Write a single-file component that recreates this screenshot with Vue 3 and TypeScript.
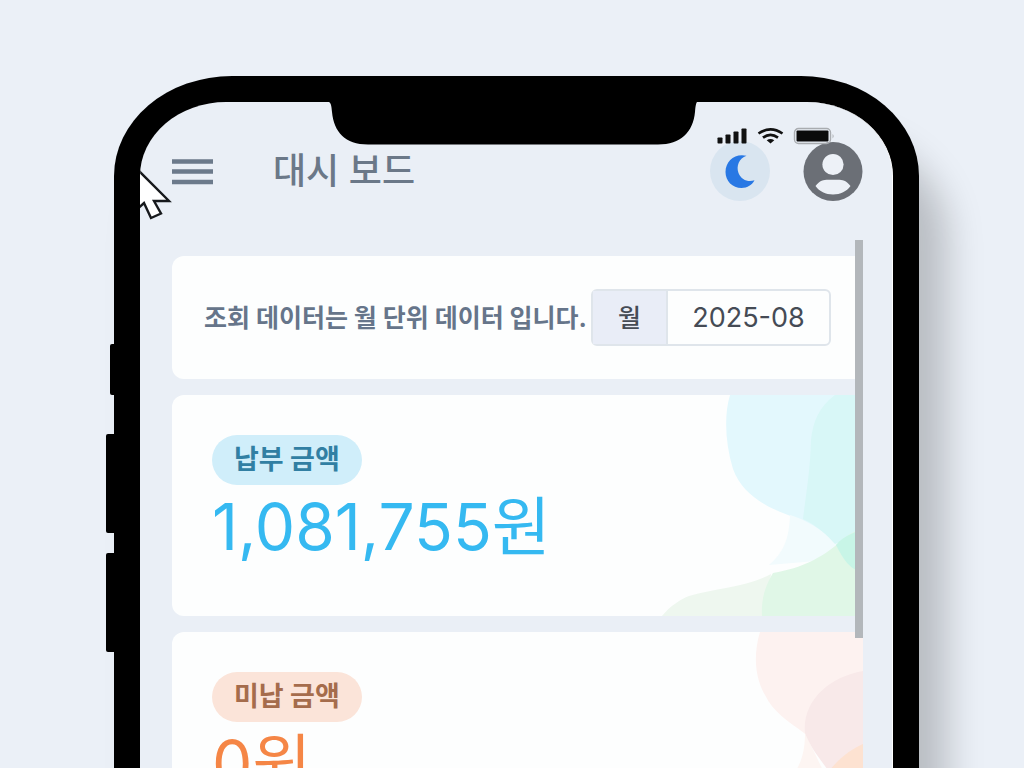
<script setup lang="ts">
import { ref } from 'vue'

interface Amount {
  id: string
  label: string
  value: string
}

const month = ref('2025-08')
const amounts: Amount[] = [
  { id: 'paid', label: '납부 금액', value: '1,081,755원' },
  { id: 'unpaid', label: '미납 금액', value: '0원' },
]
</script>

<template>
  <div class="stage">
    <div class="phone">
      <span class="side side-mute"></span>
      <span class="side side-up"></span>
      <span class="side side-down"></span>
      <div class="screen">
        <svg class="notch" width="368" height="43" viewBox="0 0 368 43" aria-hidden="true">
          <path d="M0 0C2 1 2.500 4 3 10C5 30 16 42.500 39 42.500H329C352 42.500 364 30 366 10C366.500 4 367 1 368 0Z" fill="#000" />
        </svg>
        <svg class="status" width="118" height="18" viewBox="0 0 118 18" aria-hidden="true">
          <g fill="#111">
            <rect x="0.500" y="10.500" width="5" height="6" rx="0.800" />
            <rect x="8.500" y="7.500" width="5" height="9" rx="0.800" />
            <rect x="16.500" y="4.500" width="5" height="12" rx="0.800" />
            <rect x="24.500" y="1.500" width="5" height="15" rx="0.800" />
            <path d="M53.500 16.500L49.700 13.200Q53.500 10.700 57.300 13.200Z" />
          </g>
          <g fill="none" stroke="#111" stroke-width="2.600">
            <path d="M41.500 6.500Q53.500 -1.800 65.500 6.500" />
            <path d="M46 10.600Q53.500 5 61 10.600" />
          </g>
          <rect x="77.500" y="1.500" width="36" height="15" rx="4" fill="none" stroke="#a9acb0" stroke-width="1.400" />
          <rect x="79.500" y="3.500" width="32" height="11" rx="1" fill="#0b0b0b" />
          <path d="M115.500 7Q118 9 115.500 11.500Z" fill="#b5b8bc" />
        </svg>

        <header class="topbar">
          <button class="icon-button menu" type="button" aria-label="메뉴">
            <svg width="41" height="27" viewBox="0 0 41 27">
              <path d="M0 3.500H41M0 13.500H41M0 24H41" stroke="#6c7a8b" stroke-width="4.400" />
            </svg>
          </button>
          <h1>대시 보드</h1>
          <button class="icon-button theme" type="button" aria-label="다크 모드">
            <svg width="60" height="60" viewBox="0 0 60 60">
              <path d="M36.500 14.800C29 17.500 26 25 28.500 32C31.500 39 38 41.500 44.500 39.300C42 44 37.500 47 31.500 47C22.500 47 15.500 40 15.500 31C15.500 20 25 12 36.500 14.800Z" fill="#2878e4" />
            </svg>
          </button>
          <button class="icon-button account" type="button" aria-label="계정">
            <svg width="60" height="60" viewBox="0 0 60 60">
              <circle cx="30" cy="30.500" r="29.500" fill="#6b6f76" />
              <circle cx="30" cy="23.500" r="10.600" fill="#edf1f7" />
              <path d="M12.500 45C18 37.500 23.500 38.800 30 38.800S42 37.500 47.500 45C43.500 50.500 37.500 53.500 30 53.500S16.500 50.500 12.500 45Z" fill="#edf1f7" />
            </svg>
          </button>
        </header>

        <main class="content">
          <section class="card filter">
            <p>조회 데이터는 월 단위 데이터 입니다.</p>
            <div class="field">
              <label for="month">월</label>
              <input id="month" v-model="month" type="text" />
            </div>
          </section>
          <section v-for="item in amounts" :key="item.id" class="card amount" :class="item.id">
            <svg v-if="item.id === 'paid'" class="art" width="240" height="221" viewBox="0 0 240 221" aria-hidden="true">
              <path d="M107 0C101 20 102 48 110 74C119 99 143 112 165 120C184 127 201 137 212 149L240 139V0Z" fill="#e3f8fd" />
              <path d="M167 120C166 145 160 158 146 170L205 165L214 149C204 138 184 125 167 120Z" fill="#f2fbfd" />
              <path d="M212 0C196 12 190 26 188 45C187 78 183 98 180 124C195 131 205 141 212 149L240 138V0Z" fill="#d8f7f7" />
              <path d="M39 221C47 211 58 204 66 201C93 193 125 192 148 179L143 221Z" fill="#eef7ef" />
              <path d="M139 221C138 205 142 191 150 178C180 173 199 162 216 148C225 139 232 136 240 133V221Z" fill="#e0f7e7" />
              <path d="M213 150C219 142 230 138 240 134V177C228 176 220 164 213 150Z" fill="#c8f5e7" />
            </svg>
            <svg v-else class="art" width="240" height="221" viewBox="0 0 240 221" aria-hidden="true">
              <path d="M137 0C130 23 132 46 142 63C150 80 165 89 181 101L240 150V0Z" fill="#fdf2f0" />
              <path d="M182 101C182 120 178 132 169 145L175 180H220Z" fill="#fdf5f2" />
              <path d="M240 39C205 45 179 70 182 101C189 120 203 133 214 152H240Z" fill="#f8e9e9" />
              <path d="M199 150C209 132 224 119 240 112V200H180Z" fill="#fde2d1" />
            </svg>
            <h2>{{ item.label }}</h2>
            <p class="value">{{ item.value }}</p>
          </section>
          <span class="thumb"></span>
        </main>
        <svg class="pointer" width="34" height="52" viewBox="0 0 34 52" aria-hidden="true">
          <path d="M-6 -4L29 31H14L21 43.500L11 48L4 33L-6 42Z" fill="#fff" stroke="#17191c" stroke-width="2.400" />
        </svg>
      </div>
    </div>
  </div>
</template>

<style>
body {
  margin: 0;
  background: #ebf0f7;
}
</style>

<style scoped>
* {
  box-sizing: border-box;
}
h1,
h2,
p {
  margin: 0;
}
.stage {
  height: 100vh;
  overflow: hidden;
  padding: 76px 105px 0 114px;
  background: #ebf0f7;
  font-family: Inter, "Noto Sans CJK KR", sans-serif;
}
.phone {
  position: relative;
  padding: 26px 26px 60px;
  background: #000;
  border-radius: 118px / 100px;
  box-shadow: 28px 60px 36px rgba(0, 0, 0, 0.21);
}
.side {
  position: absolute;
  right: 100%;
  width: 8px;
  height: 99px;
  background: #000;
  border-radius: 2px 0 0 2px;
}
.side-mute {
  top: 268px;
  width: 4px;
  height: 51px;
}
.side-up {
  top: 358px;
}
.side-down {
  top: 477px;
}
.screen {
  position: relative;
  overflow: hidden;
  min-height: 900px;
  background: #eaeff6;
  border-right: 1px solid #fff;
  border-radius: 86px / 74px;
}
.notch {
  position: absolute;
  top: 0;
  left: 189px;
}
.status {
  position: absolute;
  top: 25px;
  right: 57px;
}
.topbar {
  display: flex;
  align-items: center;
  height: 138px;
  padding: 0 29px 0 32px;
}
.icon-button {
  display: block;
  padding: 0;
  border: 0;
  background: none;
}
.icon-button svg {
  display: block;
}
h1 {
  flex: 1;
  margin-left: 60px;
  color: #6b7888;
  font-size: 36px;
  line-height: 48px;
  font-weight: 500;
}
.theme {
  margin-right: 33px;
  border-radius: 50%;
  background: #d9e5f0;
}
.content {
  position: relative;
  display: flex;
  flex-direction: column;
  gap: 16px;
  padding: 16px 0 0 32px;
  margin-right: 29px;
}
.card {
  position: relative;
  overflow: hidden;
  background: #fdfefe;
  border-radius: 12px 0 0 12px;
}
.filter {
  display: flex;
  align-items: center;
  justify-content: space-between;
  padding: 33px 32px;
  color: #66758a;
  font-size: 25px;
  line-height: 32px;
  font-weight: 700;
  white-space: nowrap;
}
.field {
  display: flex;
  flex: none;
  width: 240px;
  height: 57px;
  border: 2px solid #dfe5eb;
  border-radius: 6px;
  color: #454b55;
}
.field label {
  flex: none;
  display: flex;
  align-items: center;
  justify-content: center;
  width: 75px;
  border-right: 2px solid #dfe5eb;
  background: #e9edf7;
  font-weight: 500;
}
.field input {
  flex: 1;
  min-width: 0;
  padding: 0;
  border: 0;
  outline: 0;
  background: transparent;
  color: inherit;
  font: 400 27px/32px Inter, sans-serif;
  text-align: center;
}
.amount {
  min-height: 221px;
  padding: 40px;
}
.art {
  position: absolute;
  top: 0;
  right: 0;
}
h2 {
  position: relative;
  width: fit-content;
  padding: 0 22px;
  border-radius: 25px;
  font-size: 27px;
  line-height: 50px;
  font-weight: 700;
}
.value {
  position: relative;
  font-size: 64px;
  line-height: 84px;
}
.paid h2 {
  background: #d0eefa;
  color: #317fa3;
}
.paid .value {
  color: #35b9f1;
}
.unpaid h2 {
  background: #fbe4d9;
  color: #a56c4c;
}
.unpaid .value {
  color: #f58646;
}
.thumb {
  position: absolute;
  top: 0;
  right: 0;
  width: 8px;
  height: 398px;
  background: #b3b7bb;
}
.pointer {
  position: absolute;
  top: 68px;
  left: 0;
}
</style>
